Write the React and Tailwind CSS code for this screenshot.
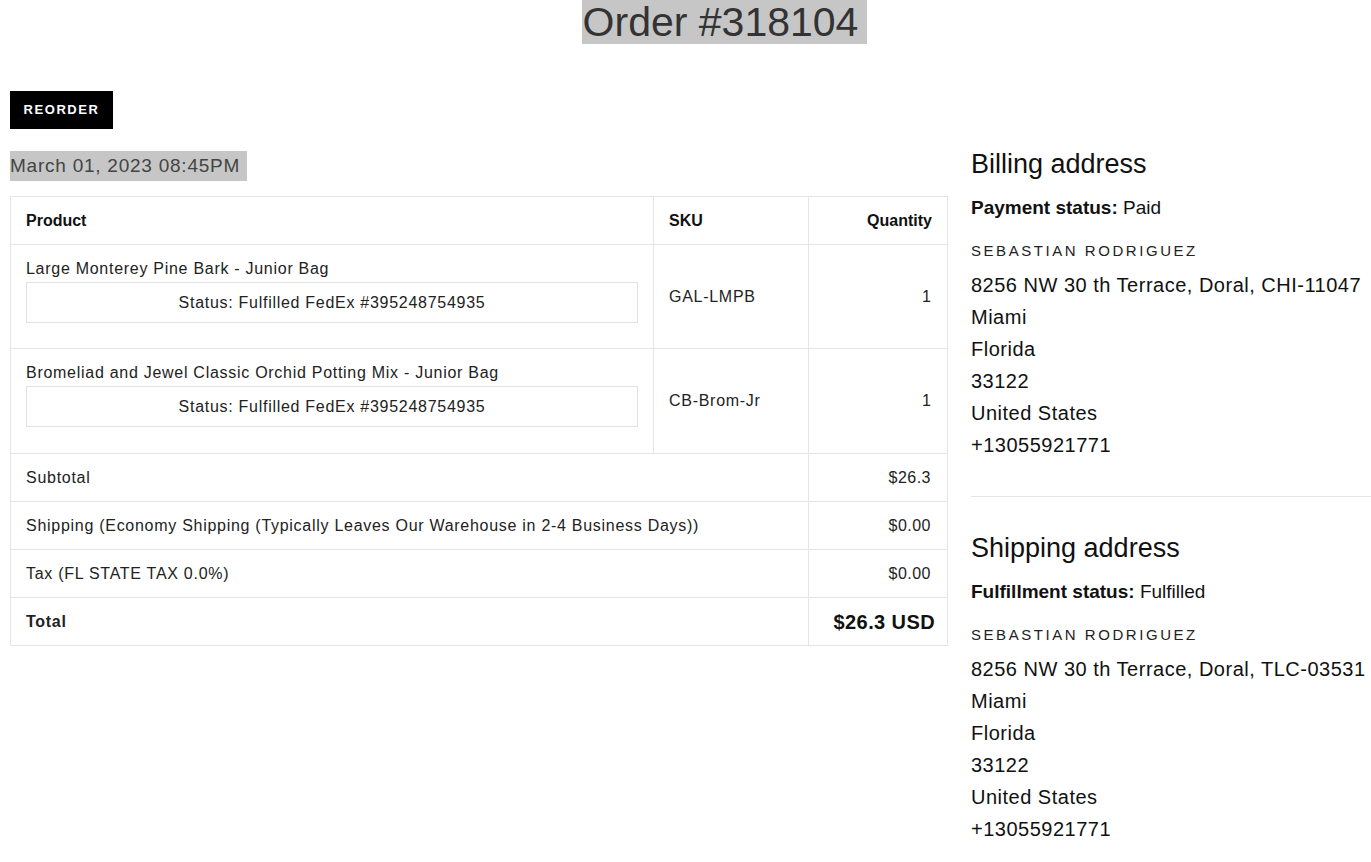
import React from "react";

const font = { fontFamily: '"Liberation Sans", Arial, sans-serif' };

function Address({ title, label, value, code }) {
  return (
    <div>
      <h2 className="text-[27px] leading-[36px] text-[#111] font-normal">{title}</h2>
      <p className="mt-[12px] text-[19px] leading-[28px] text-[#111]">
        <span className="font-bold">{label}</span> {value}
      </p>
      <p className="mt-[18px] text-[15px] leading-[22px] tracking-[0.17em] text-[#222] uppercase">
        Sebastian Rodriguez
      </p>
      <div className="mt-[7px] text-[20px] leading-[32px] tracking-[0.025em] text-[#111]">
        <p>8256 NW 30 th Terrace, Doral, {code}</p>
        <p>Miami</p>
        <p>Florida</p>
        <p>33122</p>
        <p>United States</p>
        <p>+13055921771</p>
      </div>
    </div>
  );
}

function ProductRow({ name, sku, tall }) {
  return (
    <tr className={tall ? "h-[105px]" : "h-[104px]"}>
      <td className="border border-[#e5e5e5] px-[15px] align-top pt-[12px]">
        <div className="text-[16px] leading-[24px] tracking-[0.045em] text-[#222]">{name}</div>
        <div className="mt-[1px] h-[41px] border border-[#e2e2e2] flex items-center justify-center text-[16px] tracking-[0.045em] text-[#222]">
          Status: Fulfilled FedEx #395248754935
        </div>
      </td>
      <td className="border border-[#e5e5e5] px-[15px] text-[16px] tracking-[0.045em] text-[#222] align-middle">{sku}</td>
      <td className="border border-[#e5e5e5] px-[16px] text-[16px] text-[#222] text-right align-middle">1</td>
    </tr>
  );
}

function SumRow({ label, value, bold }) {
  return (
    <tr className="h-[48px]">
      <td colSpan={2} className={`border border-[#e5e5e5] px-[15px] text-[16px] tracking-[0.045em] text-[#222] ${bold ? "font-bold" : ""}`}>
        {label}
      </td>
      <td className={`border border-[#e5e5e5] px-[12px] text-right ${bold ? "text-[20px] font-bold tracking-[0.02em] text-[#111]" : "text-[16px] tracking-[0.03em] text-[#222] pr-[16px]"}`}>
        {value}
      </td>
    </tr>
  );
}

export default function App() {
  return (
    <div className="min-h-[862px] bg-white overflow-hidden" style={font}>
      <div className="flex justify-center pl-[78px]">
        <h1 className="bg-[#c6c6c6] text-[#333] text-[41px] leading-[44px] pl-[1px] pr-[9px] font-normal">
          Order #318104
        </h1>
      </div>
      <div className="pl-[10px] flex gap-[23px] mt-[47px]">
        <div className="w-[938px] shrink-0">
          <button className="bg-black text-white text-[13px] font-bold tracking-[0.12em] h-[38px] w-[103px] flex items-center justify-center">
            REORDER
          </button>
          <div className="mt-[22px] inline-block bg-[#c6c6c6] text-[#444] text-[19px] leading-[30px] tracking-[0.04em] pr-[7px]">
            March 01, 2023 08:45PM
          </div>
          <table className="mt-[15px] w-full border-collapse border border-[#e5e5e5]">
            <thead>
              <tr className="h-[48px]">
                <th className="w-[643px] border border-[#e5e5e5] px-[15px] text-left text-[16px] font-bold text-[#111]">Product</th>
                <th className="w-[155px] border border-[#e5e5e5] px-[15px] text-left text-[16px] font-bold text-[#111]">SKU</th>
                <th className="border border-[#e5e5e5] px-[15px] text-right text-[16px] font-bold text-[#111]">Quantity</th>
              </tr>
            </thead>
            <tbody>
              <ProductRow name="Large Monterey Pine Bark - Junior Bag" sku="GAL-LMPB" />
              <ProductRow name="Bromeliad and Jewel Classic Orchid Potting Mix - Junior Bag" sku="CB-Brom-Jr" tall />
              <SumRow label="Subtotal" value="$26.3" />
              <SumRow label="Shipping (Economy Shipping (Typically Leaves Our Warehouse in 2-4 Business Days))" value="$0.00" />
              <SumRow label="Tax (FL STATE TAX 0.0%)" value="$0.00" />
              <SumRow label="Total" value="$26.3 USD" bold />
            </tbody>
          </table>
        </div>
        <div className="flex-1 pt-[55px]">
          <Address title="Billing address" label="Payment status:" value="Paid" code="CHI-11047" />
          <div className="mt-[35px] border-t border-[#e5e5e5] mr-[-20px]" />
          <div className="mt-[33px]">
            <Address title="Shipping address" label="Fulfillment status:" value="Fulfilled" code="TLC-03531" />
          </div>
        </div>
      </div>
    </div>
  );
}
